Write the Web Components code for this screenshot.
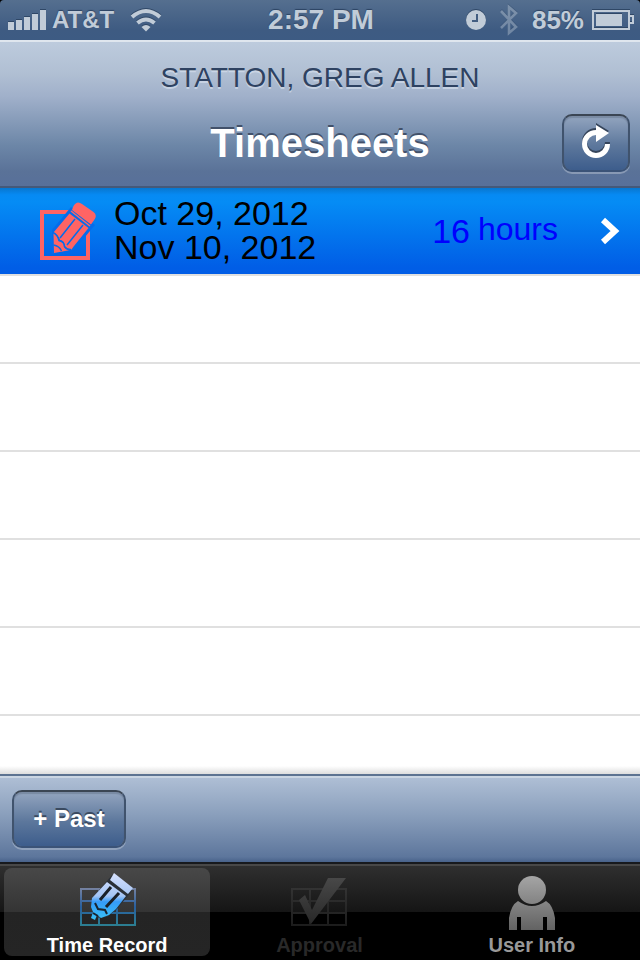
<!DOCTYPE html>
<html lang="en">
<head>
<meta charset="utf-8">
<meta name="viewport" content="width=device-width, initial-scale=1">
<title>Timesheets</title>
<style>
html, body { margin: 0; background: #000; }
body { font-family: "Liberation Sans", Arial, Helvetica, sans-serif; }
</style>
</head>
<body>
<timesheet-app></timesheet-app>
<script>
const define = (name, html) => {
  const template = document.createElement('template');
  template.innerHTML = html;
  customElements.define(name, class extends HTMLElement {
    constructor() {
      super();
      this.attachShadow({ mode: 'open' }).append(template.content.cloneNode(true));
    }
  });
};

define('status-bar', `
<style>
:host { display: grid; grid-template-columns: 1fr auto 1fr; align-items: center; height: 40px; padding: 0 6px 0 8px; box-sizing: border-box;
  background: linear-gradient(#556f8f, #3e5b82 75%, #3d5b83); color: #c1ccd8; font-weight: bold; text-shadow: 0 -1px 1px #2c4362; border-radius: 4px 4px 0 0; }
div { display: flex; align-items: center; }
svg { display: block; filter: drop-shadow(0 -1px 0 #2f4766); }
.carrier { font-size: 24px; margin: 0 16px 0 6px; }
.time { font-size: 28px; }
.right { justify-content: flex-end; }
.charge { font-size: 26px; margin: 0 8px 0 14px; }
.bt { margin-left: 14px; opacity: .4; }
</style>
<div>
  <svg width="38" height="22" viewBox="0 0 38 22" fill="currentColor"><path d="M0 13h6v8H0zM8 11h6v10H8zM16 8h6v13h-6zM24 5h6v16h-6zM32 1h6v20h-6z"/></svg>
  <span class="carrier">AT&amp;T</span>
  <svg width="32" height="24" viewBox="0 0 32 24" fill="none" stroke="currentColor" stroke-width="4"><path d="M2 9Q16-3 30 9M7.500 15Q16 8 24.500 15"/><path d="M11.500 19q4.500-4 9 0L16 23.500z" fill="currentColor" stroke="none"/></svg>
</div>
<span class="time">2:57 PM</span>
<div class="right">
  <svg width="20" height="20" viewBox="0 0 20 20"><circle cx="10" cy="10" r="10" fill="currentColor"/><path d="M11 4v7H6" fill="none" stroke="#425d81" stroke-width="2"/></svg>
  <svg class="bt" width="18" height="32" viewBox="0 0 18 32" fill="none" stroke="currentColor" stroke-width="2.6"><path d="M1 7l15 16-7 6V3l7 6L1 24"/></svg>
  <span class="charge">85%</span>
  <svg width="42" height="22" viewBox="0 0 42 22"><path d="M1 2h36v18H1zM37 7h4v7h-4" fill="none" stroke="currentColor" stroke-width="2"/><path d="M4 5h26v12H4z" fill="currentColor"/></svg>
</div>`);

define('bar-button', `
<style>
:host { display: block; }
button { display: flex; align-items: center; justify-content: center; width: 100%; height: 58px; padding: 0 16px; box-sizing: border-box;
  font: bold 24px "Liberation Sans", Arial, sans-serif; white-space: nowrap; color: #fff; text-shadow: 0 -2px 0 #3a4a60;
  border: 2px solid; border-color: #3b4654 #40536d #3b5377; border-radius: 10px;
  background: linear-gradient(#93a5bf, #5c779c 55%, #3d5d8c); background-clip: padding-box;
  box-shadow: 0 2px 0 rgba(255,255,255,.28), inset 0 2px 1px rgba(50,65,85,.25); }
</style>
<button type="button"><slot></slot></button>`);

define('title-bar', `
<style>
:host { display: block; height: 148px; box-sizing: border-box; padding: 22px 10px 0; border-top: 2px solid #dfe6ee; border-bottom: 2px solid #45597a;
  background: linear-gradient(#bdcbdd, #b0bfd3 22%, #a0b0ca 38%, #6c86a7 72%, #5a7298 90%, #58709a); }
.name { font-size: 28px; line-height: 28px; text-align: center; color: #2e4261; text-shadow: 0 2px 0 rgba(225,233,244,.55); }
.row { display: grid; grid-template-columns: 1fr auto 1fr; align-items: center; margin-top: 22px; }
h1 { grid-column: 2; margin: 0; font-size: 40px; line-height: 44px; color: #fff; text-shadow: 0 -2px 0 #42516a; }
bar-button { justify-self: end; }
svg { display: block; flex: none; filter: drop-shadow(0 -2px 0 #35445a); }
</style>
<div class="name"><slot name="name"></slot></div>
<div class="row"><h1><slot></slot></h1>
<bar-button><svg role="img" aria-label="Refresh" width="32" height="36" viewBox="0 0 32 36"><path d="M27.500 19A11.500 11.500 0 1 1 16 7.500" fill="none" stroke="#fff" stroke-width="5"/><path d="M16 0l13 8-13 9z" fill="#fff"/></svg></bar-button></div>`);

define('timesheet-row', `
<style>
:host { display: block; height: 88px; box-sizing: border-box; border-bottom: 2px solid #e0e0e0; }
a { display: flex; align-items: center; height: 100%; box-sizing: border-box; padding: 0 20px 0 38px; color: #000; text-decoration: none;
  background: linear-gradient(#0876ce, #068af3 8%, #058cf5 16%, #015ee6 92%, #015de6); }
svg { display: block; flex: none; }
.dates { flex: 1; margin-left: 16px; padding-bottom: 2px; font-size: 34px; line-height: 34px; }
.hours { display: flex; align-items: flex-start; color: #00f; font-size: 32px; line-height: 32px; margin-right: 42px; }
.count { font-size: 34px; line-height: 36px; margin-right: 8px; }
</style>
<a href="#timesheet">
<svg width="60" height="60" viewBox="0 0 60 60"><path d="M4 11h46v46H4z" fill="none" stroke="#ff6464" stroke-width="4"/>
<path d="M33 6L57 24 36 49 14 53V29z" fill="#046ceb"/>
<path d="M35.500 5Q39-1 44 3L55.500 11Q59.500 14 56.500 18.500L53 23.500 34 9z" fill="#ff6464"/>
<path d="M31.500 12.500L50.500 27 36 45 33.500 48.500Q30 50 26 45 27 40 22 39 20 34 15.500 31.500z" fill="#ff6464"/>
<path d="M33 10L52 25" stroke="#ff6464" stroke-width="1.500"/>
<path d="M15.500 32Q20 35 21 40 26 41 26 46 29 50 32.500 49L16 52z" fill="#ff6464"/>
<path d="M37 18L22 37M45 24L29 44M15 31.500Q20 34 21 39.500 26.500 40.500 26.500 45.500 29 49 33 48.500M15.500 44q6 1 8 6" stroke="#046ceb" stroke-width="1.500" fill="none"/></svg>
<div class="dates"><slot></slot></div>
<div class="hours"><span class="count"><slot name="hours"></slot></span><span>hours</span></div>
<svg width="20" height="28" viewBox="0 0 20 28"><path d="M3 3l12 11L3 25" fill="none" stroke="#fff" stroke-width="6"/></svg>
</a>`);

define('timesheet-list', `
<style>
:host { display: block; flex: 1; overflow: hidden; background: linear-gradient(transparent calc(100% - 8px), #ddd), repeating-linear-gradient(#fff 0 86px, #e0e0e0 86px 88px); }
</style>
<slot></slot>`);

define('tool-bar', `
<style>
:host { display: flex; height: 88px; box-sizing: border-box; padding: 14px 12px 0; border-top: 2px solid #5d7391; box-shadow: inset 0 2px 0 #cbd6e3;
  background: linear-gradient(#b0c0d6, #8a9fbc 45%, #5d769c 94%, #48628a); }
::slotted(bar-button) { min-width: 114px; }
</style>
<slot></slot>`);

define('tab-item', `
<style>
:host { display: block; flex: 1; padding: 4px 3px; color: #999; }
button { display: flex; flex-direction: column; align-items: center; justify-content: flex-end; width: 100%; height: 88px; box-sizing: border-box; padding: 0;
  border: 0; border-radius: 8px; background: none; color: inherit; font: bold 20px "Liberation Sans", Arial, sans-serif; }
:host([selected]) { color: #fff; }
:host([selected]) button { background: linear-gradient(#484848, #343434 50%, #242424 50%, #252525); }
:host([disabled]) { color: #292929; }
.label { line-height: 22px; }
</style>
<button type="button"><slot name="icon"></slot><span class="label"><slot></slot></span></button>`);

define('tab-bar', `
<style>
:host { display: flex; height: 98px; box-sizing: border-box; border-top: 2px solid #17191d; box-shadow: inset 0 2px 0 #484848;
  background: linear-gradient(#303030, #151515 48px, #000 48px); }
nav { display: flex; flex: 1; padding: 0 2px 0 1px; }
svg { display: block; }
</style>
<nav>
<tab-item selected><svg slot="icon" width="58" height="62" viewBox="0 0 58 62">
<defs><linearGradient id="g" gradientUnits="userSpaceOnUse" x1="0" y1="16" x2="0" y2="54"><stop stop-color="#7682a0"/><stop offset=".5" stop-color="#285f9e"/><stop offset="1" stop-color="#2c7f91"/></linearGradient>
<linearGradient id="p" gradientUnits="userSpaceOnUse" x1="0" y1="0" x2="0" y2="48"><stop stop-color="#dae3ff"/><stop offset=".5" stop-color="#a5c5f4"/><stop offset=".62" stop-color="#359bf8"/><stop offset="1" stop-color="#39c1f6"/></linearGradient></defs>
<path d="M3 17h54v36H3zM3 29h54M3 41h54M21 17v36M39 17v36" fill="none" stroke="url(#g)" stroke-width="2"/>
<path d="M34 3L54 19 49 25 39 37 29 45 15 46 14 26 29 9z" fill="#2a3038"/>
<path d="M36 1L55 16 50 22 32 8z" fill="url(#p)"/>
<path d="M29 10L48 24 38 37 31 43 23 46 19 43 17 48 13 46 15 40 13 35 14 26z" fill="url(#p)"/>
<path d="M33 15L22 28M41 21L28 35" stroke="#1a2028" stroke-width="3" fill="none"/>
<path d="M17 31l3 6 7 1 2 4M15 41l5 3" stroke="#1a2530" stroke-width="2" fill="none"/></svg>Time Record</tab-item>
<tab-item disabled><svg slot="icon" width="58" height="62" viewBox="0 0 58 62">
<defs><linearGradient id="c" x2="0" y2="1"><stop stop-color="#484848"/><stop offset="1" stop-color="#282828"/></linearGradient>
<linearGradient id="d" gradientUnits="userSpaceOnUse" x1="0" y1="16" x2="0" y2="54"><stop stop-color="#333"/><stop offset="1" stop-color="#1c1c1c"/></linearGradient></defs>
<path d="M2 17h54v36H2zM2 29h54M2 41h54M20 17v36M38 17v36" fill="none" stroke="url(#d)" stroke-width="2"/>
<path d="M9 28l6-5 7 15L38 6h18L21 52z" fill="url(#c)"/></svg>Approval</tab-item>
<tab-item><svg slot="icon" width="50" height="62" viewBox="0 0 50 62">
<defs><linearGradient id="u" gradientUnits="userSpaceOnUse" x1="0" y1="0" x2="0" y2="60"><stop stop-color="#aaa"/><stop offset="1" stop-color="#606060"/></linearGradient></defs>
<circle cx="25" cy="18" r="14" fill="url(#u)"/>
<path d="M11 29Q25 39 39 29 46 33 48 46V58H40V45H36V58H14V45H10V58H2V46Q4 33 11 29z" fill="url(#u)"/></svg>User Info</tab-item>
</nav>`);

define('timesheet-app', `
<style>
:host { display: flex; flex-direction: column; min-height: 100vh; }
</style>
<status-bar></status-bar>
<title-bar><span slot="name">STATTON, GREG ALLEN</span>Timesheets</title-bar>
<timesheet-list><timesheet-row><span slot="hours">16</span>Oct 29, 2012<br>Nov 10, 2012</timesheet-row></timesheet-list>
<tool-bar><bar-button>+ Past</bar-button></tool-bar>
<tab-bar></tab-bar>`);
</script>
</body>
</html>
